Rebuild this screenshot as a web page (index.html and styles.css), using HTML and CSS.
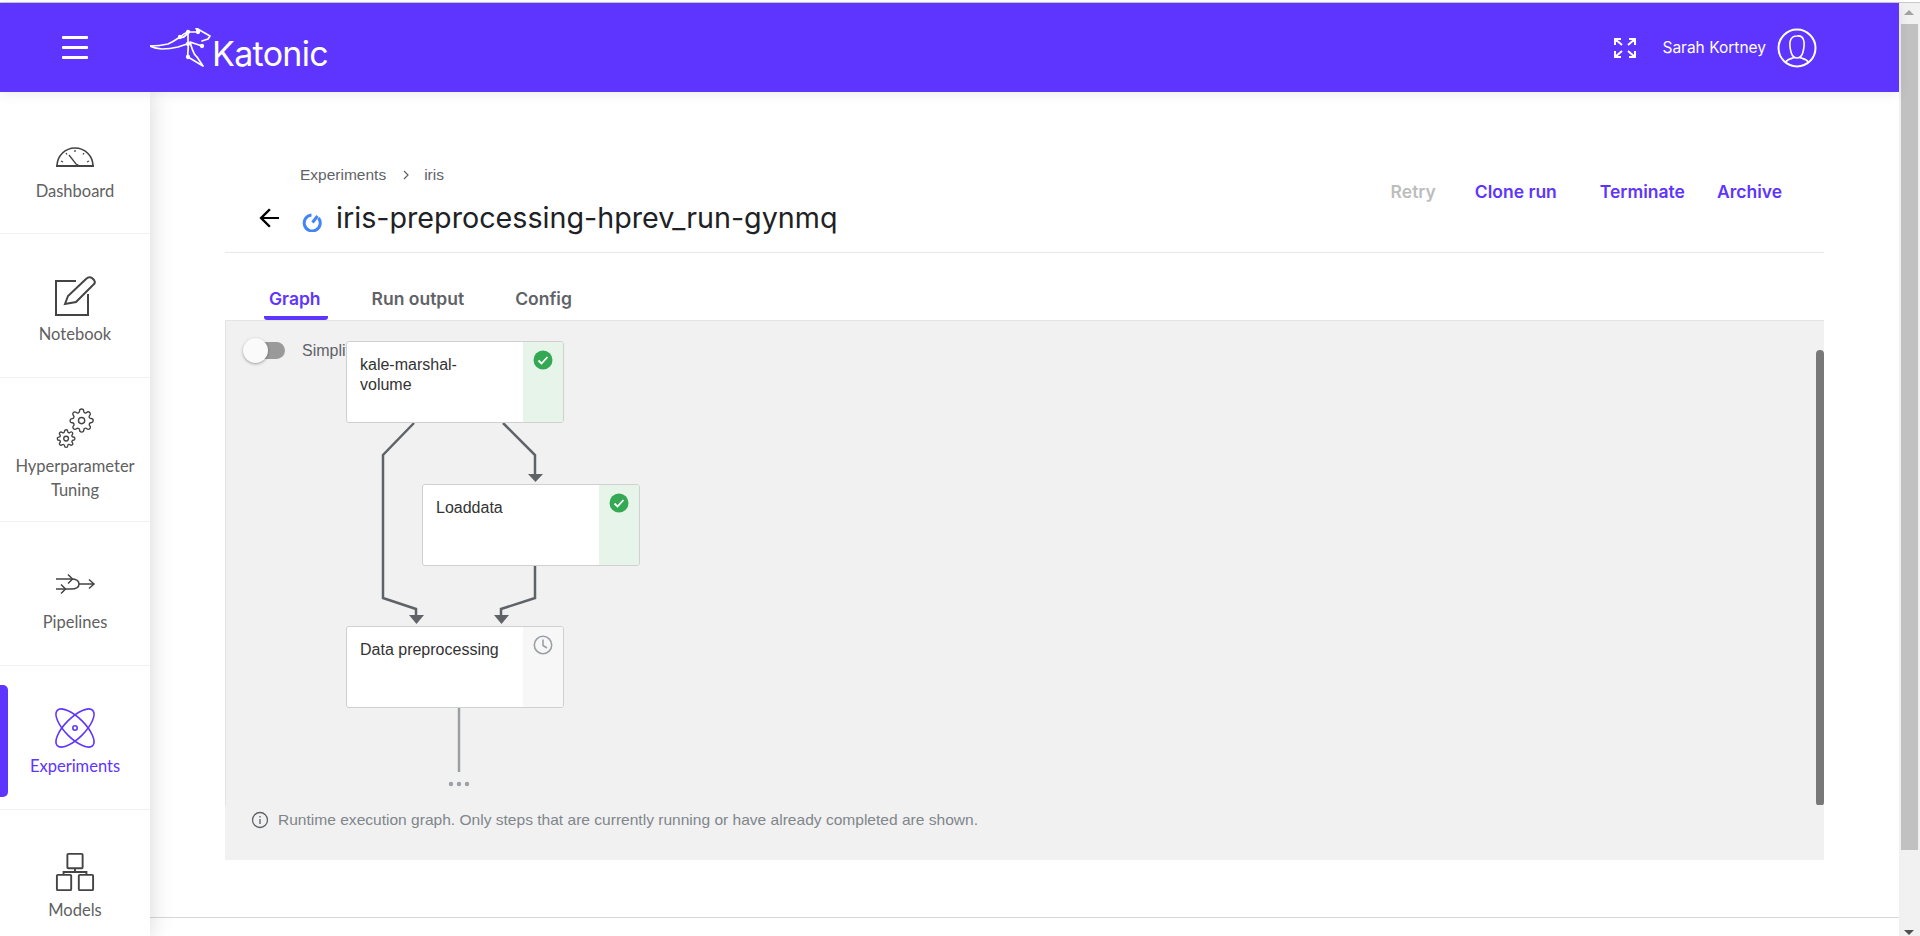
FILE: index.html
```html
<html>
  <head>
    <title>Katonic - Experiments</title>
    <meta name="viewport" content="width=device-width, initial-scale=1">
    <link rel="stylesheet" href="styles.css">
  </head>
  <body>
    <div class="top-edge"></div>
    <div class="window">
      <div class="app">
        <!-- Header -->
        <header class="topbar">
          <div class="menu-btn"><span></span><span></span><span></span></div>
          <div class="logo">
            <svg class="logo-roo" width="66" height="40" viewBox="0 0 66 40" fill="none" stroke="#fff" stroke-width="1.7" stroke-linejoin="round" stroke-linecap="round">
              <path d="M0 18 C8 18 14 17 18 16 C23 14 27 11 30 9 C33 6 35 5 38 4 L48 4 L46 0 L60 8 L58 11 L52 13"/>
              <path d="M0 18 C4 20 8 21 12 21 C18 21 24 20 28 19 C31 18 34 17 37 16"/>
              <path d="M30 9 C33 10 36 8 38 4M38 4 C38 8 38 12 38 16 C39 21 37 25 38 29 L53 38 L47 29 C43 26 42 20 40 14 L52 18"/>
              <circle cx="38" cy="4" r="1.3" fill="#fff"/>
              <circle cx="48" cy="4" r="1.3" fill="#fff"/>
              <circle cx="38" cy="16" r="1.3" fill="#fff"/>
              <circle cx="52" cy="18" r="1.3" fill="#fff"/>
              <circle cx="30" cy="9" r="1.3" fill="#fff"/>
              <circle cx="38" cy="29" r="1.3" fill="#fff"/>
            </svg>
            <span class="logo-text">Katonic</span>
          </div>
          <div class="topbar-right">
            <svg class="expand-icon" width="22" height="20" viewBox="0 0 22 20" fill="none" stroke="#fff" stroke-width="2">
              <path d="M1 7V1H7M1 1L8 7M15 1H21V7M21 1L14 7M1 13V19H7M1 19L8 13M15 19H21V13M21 19L14 13"/>
            </svg>
            <span class="user-name">Sarah Kortney</span>
            <svg class="avatar" width="40" height="40" viewBox="0 0 40 40" fill="none" stroke="#fff">
              <circle cx="20" cy="20" r="18.5" stroke-width="2"/>
              <path stroke-width="1.6" d="M14 24 C12 16 12 8 20 8 C28 7 28 16 26 24 C25 28 23 30 20 30 C17 30 15 28 14 24Z"/>
              <path stroke-width="1.6" d="M9 34 C10 31 14 31 17 29.5M31 34 C30 31 26 31 23 29.5"/>
            </svg>
          </div>
        </header>

        <div class="body-row">
          <!-- Sidebar -->
          <nav class="sidebar">
            <div class="nav-item">
              <svg class="nav-icon" width="40" height="40" viewBox="0 0 40 40" fill="none" stroke="#444" stroke-width="1.6">
                <path d="M2 33 A18 18 0 0 1 38 33 Z"/>
                <path d="M1 33H39" stroke-width="2"/>
                <path d="M20 17V19M11 20L12 21.5M29 20L28 21.5M6 28L8 29M34 28L32 29M14 22L21 31L25 33" stroke-width="1.3"/>
              </svg>
              <span class="nav-label">Dashboard</span>
            </div>
            <div class="nav-item">
              <svg class="nav-icon" width="40" height="40" viewBox="0 0 40 40" fill="none" stroke="#444" stroke-width="2">
                <path d="M21 5H1V39H33V18"/>
                <path d="M10 28 L13 20 L31 3 Q34 0 37 2 L39 4 Q41 7 38 9 L21 26 Z"/>
              </svg>
              <span class="nav-label">Notebook</span>
            </div>
            <div class="nav-item">
              <svg class="nav-icon" width="40" height="40" viewBox="0 0 40 40" fill="none" stroke="#444">
                <defs>
                  <path id="gear" d="M19.4 15a1.65 1.65 0 0 0 .33 1.82l.06.06a2 2 0 0 1 0 2.83 2 2 0 0 1-2.83 0l-.06-.06a1.65 1.65 0 0 0-1.82-.33 1.65 1.65 0 0 0-1 1.51V21a2 2 0 0 1-2 2 2 2 0 0 1-2-2v-.09A1.65 1.65 0 0 0 9 19.4a1.65 1.65 0 0 0-1.82.33l-.06.06a2 2 0 0 1-2.83 0 2 2 0 0 1 0-2.83l.06-.06a1.65 1.65 0 0 0 .33-1.82 1.65 1.65 0 0 0-1.51-1H3a2 2 0 0 1-2-2 2 2 0 0 1 2-2h.09A1.65 1.65 0 0 0 4.6 9a1.65 1.65 0 0 0-.33-1.82l-.06-.06a2 2 0 0 1 0-2.83 2 2 0 0 1 2.83 0l.06.06a1.65 1.65 0 0 0 1.82.33H9a1.65 1.65 0 0 0 1-1.51V3a2 2 0 0 1 2-2 2 2 0 0 1 2 2v.09a1.65 1.65 0 0 0 1 1.51 1.65 1.65 0 0 0 1.82-.33l.06-.06a2 2 0 0 1 2.83 0 2 2 0 0 1 0 2.83l-.06.06a1.65 1.65 0 0 0-.33 1.82V9a1.65 1.65 0 0 0 1.51 1H21a2 2 0 0 1 2 2 2 2 0 0 1-2 2h-.09a1.65 1.65 0 0 0-1.51 1z"/>
                </defs>
                <g transform="translate(14 0) scale(1.05)" stroke-width="1.3"><use href="#gear"/><circle cx="12" cy="12" r="3"/></g>
                <g transform="translate(1.5 21) scale(.8)" stroke-width="1.7"><use href="#gear"/><circle cx="12" cy="12" r="3"/></g>
              </svg>
              <span class="nav-label">Hyperparameter<br>Tuning</span>
            </div>
            <div class="nav-item">
              <svg class="nav-icon" width="40" height="40" viewBox="0 0 40 40" fill="none" stroke="#444" stroke-width="1.5">
                <path d="M1 15H16C21 15 24 17 24 20C24 23 21 25 16 25H1"/>
                <path d="M24 20H39M34 15.5L39 20L34 24.5"/>
                <path d="M13 10.5L17.5 15L13 19.5M6 20.5L10.5 25L6 29.5"/>
              </svg>
              <span class="nav-label">Pipelines</span>
            </div>
            <div class="nav-item active">
              <svg class="nav-icon" width="40" height="40" viewBox="0 0 40 40" fill="none" stroke="#5e35ff" stroke-width="1.6">
                <ellipse cx="20" cy="20" rx="25" ry="10" transform="rotate(45 20 20)"/>
                <ellipse cx="20" cy="20" rx="25" ry="10" transform="rotate(-45 20 20)"/>
                <circle cx="20" cy="20" r="2.2"/>
              </svg>
              <span class="nav-label">Experiments</span>
            </div>
            <div class="nav-item">
              <svg class="nav-icon" width="40" height="40" viewBox="0 0 40 42" fill="none" stroke="#444" stroke-width="2">
                <rect x="12" y="2" width="16" height="15" rx="1"/>
                <rect x="1" y="24" width="15" height="16" rx="1"/>
                <rect x="24" y="24" width="15" height="16" rx="1"/>
                <path d="M20 17V21M8 24V21H32V24"/>
              </svg>
              <span class="nav-label">Models</span>
            </div>
          </nav>

          <!-- Main content -->
          <main class="main">
            <div class="page-head">
              <div class="head-left">
                <div class="crumbs">
                  <span>Experiments</span>
                  <svg class="crumb-sep" width="8" height="10" viewBox="0 0 8 10" fill="none" stroke="#5f6368" stroke-width="1.2"><path d="M2 1L6 5L2 9"/></svg>
                  <span>iris</span>
                </div>
                <div class="title-row">
                  <svg class="back-icon" width="24" height="24" viewBox="0 0 24 24" fill="#000"><path d="M22 11H6.8l7-7L12 2.4 2.4 12 12 21.6l1.7-1.6-7-7H22z"/></svg>
                  <svg class="status-icon" width="20" height="20" viewBox="0 0 20 20" fill="none" stroke="#4285f4" stroke-width="3">
                    <path d="M9.5 3A8 8 0 1 0 16.5 6"/>
                    <path d="M15.5 4L10.5 10.5"/>
                  </svg>
                  <h1 class="run-title">iris-preprocessing-hprev_run-gynmq</h1>
                </div>
              </div>
              <div class="actions">
                <span class="action disabled">Retry</span>
                <span class="action clone">Clone run</span>
                <span class="action terminate">Terminate</span>
                <span class="action archive">Archive</span>
              </div>
            </div>

            <div class="tabs">
              <span class="tab active">Graph</span>
              <span class="tab run">Run output</span>
              <span class="tab config">Config</span>
            </div>

            <section class="panel">
              <div class="graph">
                <div class="switch"><span class="switch-track"></span><span class="switch-knob"></span></div>
                <span class="simplify">Simplify Graph</span>

                <svg class="edges" width="1600" height="485" fill="none" stroke="#5f6368" stroke-width="2.5">
                  <!-- panel is at 224,320 so all points are minus that -->
                  <path d="M190 103L159 135V278L192 289V296"/>
                  <path d="M279 103L311 135V155"/>
                  <path d="M311 246V278L277 289V296"/>
                  <path d="M304 154H319L311.5 162Z" fill="#5f6368" stroke="none"/>
                  <path d="M185 295H200L192.5 304Z" fill="#5f6368" stroke="none"/>
                  <path d="M270 295H285L277.5 304Z" fill="#5f6368" stroke="none"/>
                  <path d="M235 388V452" stroke="#9aa0a6"/>
                  <g fill="#9aa0a6" stroke="none">
                    <circle cx="227" cy="464" r="2.2"/>
                    <circle cx="235" cy="464" r="2.2"/>
                    <circle cx="243" cy="464" r="2.2"/>
                  </g>
                </svg>

                <div class="node node-marshal">
                  <div class="node-name">kale-marshal-<br>volume</div>
                  <div class="node-status ok">
                    <svg width="20" height="20" viewBox="0 0 20 20"><circle cx="10" cy="10" r="9.5" fill="#34a853"/><path d="M5.5 10.5L8.5 13.5L14.5 7" fill="none" stroke="#fff" stroke-width="1.8"/></svg>
                  </div>
                </div>
                <div class="node node-load">
                  <div class="node-name">Loaddata</div>
                  <div class="node-status ok">
                    <svg width="20" height="20" viewBox="0 0 20 20"><circle cx="10" cy="10" r="9.5" fill="#34a853"/><path d="M5.5 10.5L8.5 13.5L14.5 7" fill="none" stroke="#fff" stroke-width="1.8"/></svg>
                  </div>
                </div>
                <div class="node node-prep">
                  <div class="node-name">Data preprocessing</div>
                  <div class="node-status waiting">
                    <svg width="20" height="20" viewBox="0 0 20 20" fill="none" stroke="#9aa0a6" stroke-width="1.6"><circle cx="10" cy="10" r="8.7"/><path d="M10 4.5V10.5L14 13"/></svg>
                  </div>
                </div>

                <div class="graph-scroll"></div>
              </div>
              <div class="graph-note">
                <svg width="18" height="18" viewBox="0 0 18 18" fill="none" stroke="#5f6368" stroke-width="1.3"><circle cx="9" cy="9" r="7.5"/><path d="M9 8V13M9 5V6.5"/></svg>
                <span>Runtime execution graph. Only steps that are currently running or have already completed are shown.</span>
              </div>
            </section>

            <div class="page-foot"></div>
          </main>
        </div>
      </div>

      <!-- Browser scrollbar -->
      <div class="scrollbar">
        <span class="arrow-up"></span>
        <span class="thumb"></span>
        <span class="arrow-down"></span>
      </div>
    </div>
  </body>
</html>
```

FILE: styles.css
```css
body {
  margin: 0;
  padding: 0;
  height: 100vh;
  overflow: hidden;
  display: flex;
  flex-direction: column;
  background: #fff;
  font-family: "Liberation Sans", Arial, sans-serif;
}
.top-edge {
  height: 2px;
  border-bottom: 1px solid #c9c9c9;
  flex: none;
}
.window {
  flex: 1;
  display: flex;
  min-height: 0;
}
.app {
  flex: 1;
  min-width: 0;
  display: flex;
  flex-direction: column;
}

/* Header */
.topbar {
  height: 89px;
  flex: none;
  background: #5e35ff;
  display: flex;
  align-items: center;
  color: #fff;
  position: relative;
  z-index: 3;
  box-shadow: 0 2px 12px rgba(0, 0, 0, 0.08);
}
.menu-btn {
  margin-left: 62px;
  width: 26px;
  display: flex;
  flex-direction: column;
  gap: 7px;
}
.menu-btn span {
  height: 3px;
  border-radius: 1px;
  background: #fff;
}
.logo {
  margin-left: 62px;
  display: flex;
  align-items: flex-start;
}
.logo-roo {
  margin-top: 6px;
}
.logo-text {
  font-family: Inter, "Liberation Sans", sans-serif;
  font-weight: 400;
  font-size: 34px;
  line-height: 40px;
  letter-spacing: -0.7px;
  margin-left: -4px;
  margin-top: 12px;
}
.topbar-right {
  margin-left: auto;
  display: flex;
  align-items: center;
  padding-right: 82px;
}
.user-name {
  font-family: Inter, sans-serif;
  font-size: 15.5px;
  margin-left: 26px;
  margin-right: 11px;
}

/* Sidebar */
.body-row {
  flex: 1;
  display: flex;
  min-height: 0;
}
.sidebar {
  width: 150px;
  flex: none;
  background: #fff;
  position: relative;
  z-index: 2;
  box-shadow: 0 0 22px rgba(0, 0, 0, 0.17);
  overflow: hidden;
}
.nav-item {
  height: 143px;
  border-bottom: 1px solid #f0f0f0;
  display: flex;
  flex-direction: column;
  align-items: center;
  justify-content: center;
  position: relative;
}
.nav-item:first-child {
  height: 141px;
}
.nav-item::before {
  content: "";
  height: 10px;
  flex: none;
}
.nav-icon {
  display: block;
  margin-bottom: 6px;
  overflow: visible;
  flex: none;
}
.nav-label {
  font-family: Lato, sans-serif;
  font-size: 16.5px;
  line-height: 24px;
  color: #616161;
  text-align: center;
}
.nav-item.active .nav-label {
  color: #5e35ff;
}
.nav-item.active::after {
  content: "";
  position: absolute;
  left: 0;
  top: 19px;
  width: 8px;
  height: 112px;
  background: #5e35ff;
  border-radius: 0 5px 5px 0;
}

/* Main */
.main {
  flex: 1;
  min-width: 0;
  display: flex;
  flex-direction: column;
}
.page-head {
  margin: 0 75px;
  height: 161px;
  flex: none;
  box-sizing: border-box;
  border-bottom: 1px solid #e8e8e8;
  display: flex;
  justify-content: space-between;
}
.head-left {
  padding-top: 73px;
}
.crumbs {
  display: flex;
  align-items: center;
  height: 20px;
  padding-left: 75px;
  font-size: 15.5px;
  color: #5f6368;
}
.crumb-sep {
  margin: 0 14px 0 16px;
}
.title-row {
  display: flex;
  align-items: center;
  margin-top: 13px;
  padding-left: 32px;
}
.back-icon {
  margin-right: 21px;
}
.status-icon {
  margin-right: 14px;
  margin-top: 7px;
}
.run-title {
  margin: 0;
  font-family: Inter, sans-serif;
  font-weight: 400;
  font-size: 28.7px;
  line-height: 40px;
  color: #202124;
}
.actions {
  display: flex;
  padding-top: 88px;
  padding-right: 42px;
  font-family: Inter, sans-serif;
  font-size: 17.5px;
  font-weight: 600;
  line-height: 24px;
  color: #5e35ff;
}
.action.disabled {
  color: #bdbdbd;
}
.action.clone {
  margin-left: 39px;
}
.action.terminate {
  margin-left: 43px;
}
.action.archive {
  margin-left: 32px;
}

/* Tabs */
.tabs {
  margin-left: 75px;
  height: 67px;
  flex: none;
  box-sizing: border-box;
  display: flex;
  align-items: flex-end;
  font-family: Inter, sans-serif;
  font-size: 17.5px;
  font-weight: 600;
  color: #5f6368;
}
.tab {
  height: 36px;
  line-height: 30px;
}
.tab.active {
  color: #5e35ff;
  margin-left: 39px;
  padding: 0 7px 0 5px;
  border-bottom: 4px solid #5e35ff;
  border-radius: 0 0 3px 3px;
  box-sizing: border-box;
}
.tab.run {
  margin-left: 44px;
}
.tab.config {
  margin-left: 51px;
}

/* Graph panel */
.panel {
  margin: 0 75px;
  height: 540px;
  flex: none;
  background: #f1f1f1;
  border-top: 1px solid #e4e4e4;
  box-sizing: border-box;
  display: flex;
  flex-direction: column;
}
.graph {
  height: 484px;
  flex: none;
  position: relative;
  overflow: hidden;
  border-left: 1px solid #e4e4e4;
  box-sizing: border-box;
}
.edges {
  position: absolute;
  left: -2px;
  top: -1px;
}
.switch {
  position: absolute;
  left: 17px;
  top: 17px;
  width: 42px;
  height: 25px;
}
.switch-track {
  position: absolute;
  left: 8px;
  top: 4px;
  width: 34px;
  height: 17px;
  border-radius: 9px;
  background: #9a9a9a;
}
.switch-knob {
  position: absolute;
  left: 0;
  top: 0;
  width: 25px;
  height: 25px;
  border-radius: 50%;
  background: #fafafa;
  box-shadow: 0 1px 3px rgba(0, 0, 0, 0.35);
}
.simplify {
  position: absolute;
  left: 76px;
  top: 18px;
  font-size: 16px;
  line-height: 24px;
  color: #5f6368;
  white-space: nowrap;
}
.node {
  position: absolute;
  width: 218px;
  height: 82px;
  box-sizing: border-box;
  display: flex;
  background: #fff;
  border: 1px solid #d0d0d0;
  border-radius: 3px;
  overflow: hidden;
}
.node-marshal {
  left: 120px;
  top: 20px;
}
.node-load {
  left: 196px;
  top: 163px;
}
.node-prep {
  left: 120px;
  top: 305px;
}
.node-name {
  flex: 1;
  padding: 13px 0 0 13px;
  font-size: 16px;
  line-height: 20px;
  color: #333;
}
.node-status {
  width: 40px;
  flex: none;
  padding-top: 8px;
  display: flex;
  justify-content: center;
  align-items: flex-start;
  box-sizing: border-box;
}
.node-status.ok {
  background: #e6f4ea;
}
.node-status.waiting {
  background: #f7f7f7;
}
.graph-scroll {
  position: absolute;
  right: 0;
  top: 29px;
  width: 8px;
  height: 456px;
  border-radius: 4px;
  background: #787878;
}
.graph-note {
  display: flex;
  align-items: center;
  padding: 5px 0 0 26px;
  font-size: 15.55px;
  line-height: 20px;
  color: #80868b;
}
.graph-note svg {
  margin-right: 9px;
}
.page-foot {
  margin-top: 57px;
  border-top: 1px solid #d8d8d8;
}

/* Browser scrollbar */
.scrollbar {
  width: 21px;
  flex: none;
  background: #f1f1f1;
  position: relative;
}
.thumb {
  position: absolute;
  left: 2px;
  right: 2px;
  top: 21px;
  height: 826px;
  background: #c1c1c1;
}
.arrow-up {
  position: absolute;
  left: 5px;
  top: 7px;
  border: 5px solid transparent;
  border-top: 0;
  border-bottom: 5px solid #a3a3a3;
}
.arrow-down {
  position: absolute;
  left: 5px;
  bottom: 1px;
  border: 5px solid transparent;
  border-bottom: 0;
  border-top: 5px solid #505050;
}
```
